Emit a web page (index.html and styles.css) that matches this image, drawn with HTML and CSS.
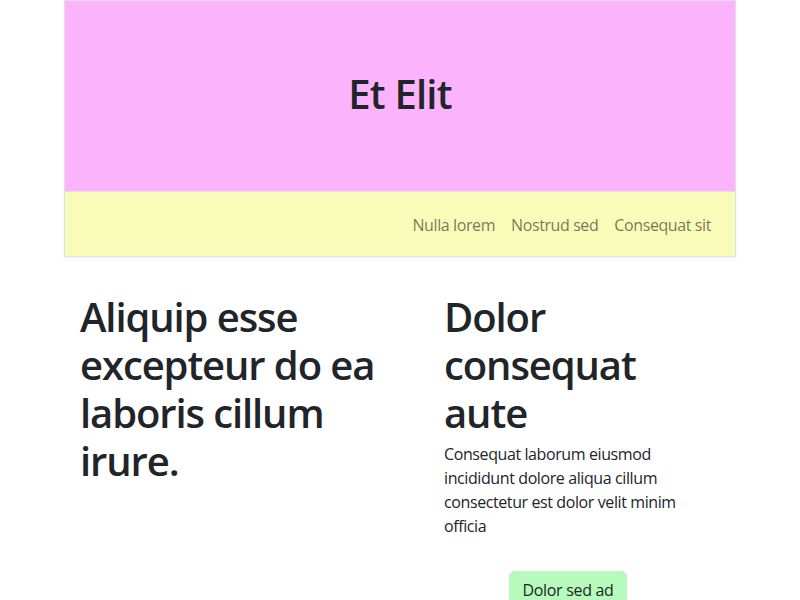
FILE: index.html
```html
<!DOCTYPE html>
<html lang="en">
<head>
<meta charset="utf-8">
<title>Et Elit</title>
<link rel="stylesheet" href="styles.css">
</head>
<body>
<div class="container">
  <header class="card">
    <div class="hero"><h1 class="title">Et Elit</h1></div>
    <nav class="nav">
      <a class="nav-link" href="#">Nulla lorem</a>
      <a class="nav-link" href="#">Nostrud sed</a>
      <a class="nav-link" href="#">Consequat sit</a>
    </nav>
  </header>
  <main class="row">
    <section class="col col-left">
      <h1 class="heading">Aliquip esse excepteur do ea laboris cillum irure.</h1>
    </section>
    <section class="col col-right">
      <h1 class="heading">Dolor consequat aute</h1>
      <p class="text">Consequat laborum eiusmod incididunt dolore aliqua cillum consectetur est dolor velit minim officia</p>
      <div class="actions"><button class="btn">Dolor sed ad</button></div>
    </section>
  </main>
</div>
</body>
</html>
```

FILE: styles.css
```css
* { box-sizing: border-box; }
body {
  margin: 0;
  font-family: "Open Sans", "Noto Sans", sans-serif;
  font-size: 16px;
  line-height: 1.5;
  color: #212529;
  background: #fff;
  letter-spacing: -0.4px;
}
.container {
  width: 672px;
  margin: 0 auto;
}
.card {
  border: 1px solid #dee2e6;
  box-shadow: 0 2px 4px rgba(0,0,0,0.06);
}
.hero {
  height: 191px;
  background: #fbb4fb;
  border-bottom: 1px solid #e6e0ea;
  display: flex;
  align-items: center;
  justify-content: center;
  padding-bottom: 4px;
}
.title {
  margin: 0;
  font-size: 40px;
  line-height: 48px;
  font-weight: 600;
  letter-spacing: -0.8px;
}
.nav {
  height: 64px;
  background: #f9fbb8;
  display: flex;
  justify-content: flex-end;
  align-items: center;
  padding: 2px 16px 0;
}
.nav-link {
  padding: 8px;
  color: rgba(0,0,0,0.55);
  text-decoration: none;
  font-size: 16px;
}
.row {
  display: grid;
  grid-template-columns: 364px 280px;
  padding-top: 36px;
}
.col { padding: 0 16px; }
.heading {
  margin: 0 0 5px;
  font-size: 40px;
  line-height: 48px;
  font-weight: 600;
  letter-spacing: -1.1px;
}
.text { margin: 0 0 16px; }
.actions {
  padding-top: 17px;
  text-align: center;
}
.btn {
  font: inherit;
  letter-spacing: -0.3px;
  color: #212529;
  background: #b6fbbb;
  border: 1px solid #b6fbbb;
  border-radius: 6px;
  padding: 6px 12px;
  line-height: 24px;
}
```
